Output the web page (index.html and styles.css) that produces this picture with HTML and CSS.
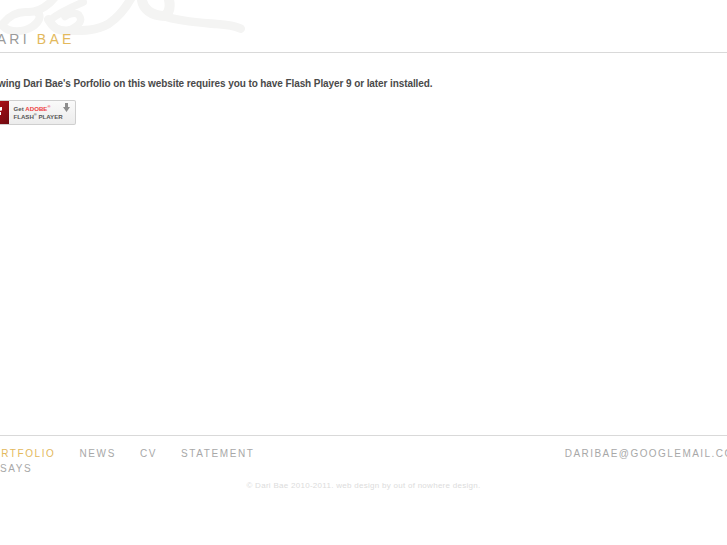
FILE: index.html
```html
<!DOCTYPE html>
<html lang="en">
<head>
<meta charset="utf-8">
<title>Dari Bae</title>
<link rel="stylesheet" href="styles.css">
</head>
<body>
<div class="page">
  <header class="header">
    <svg class="brush" width="270" height="40" viewBox="0 0 810 120" aria-hidden="true">
      <g fill="none" stroke="#f4f4f3" stroke-linecap="round" stroke-linejoin="round">
        <path stroke-width="24" d="M8 72C25 50 50 35 80 36C105 38 125 30 150 8L165 -8"/>
        <path stroke-width="24" d="M8 78C30 100 70 98 100 78C118 64 125 48 112 36"/>
        <path stroke-width="26" d="M145 58C160 82 170 94 205 92C250 92 290 92 325 72C355 52 375 28 395 -8"/>
        <path stroke-width="22" d="M150 60C175 40 205 25 250 6M205 92C240 75 250 62 236 44C225 36 205 42 195 50"/>
        <path stroke-width="30" d="M425 -5C428 28 455 48 495 48C510 35 512 15 505 -8"/>
        <path stroke-width="26" d="M490 48C540 65 600 68 650 72C680 74 705 78 722 86"/>
      </g>
    </svg>
    <h1 class="logo">DARI <span class="accent">BAE</span></h1>
  </header>
  <main class="main">
    <p class="message">Viewing Dari Bae's Porfolio on this website requires you to have Flash Player 9 or later installed.</p>
    <a class="flash" href="#">
      <span class="flash-mark"><svg width="14" height="16" viewBox="0 0 14 16" aria-hidden="true"><path d="M13 2C8 2 7 6 6 9C5.500 11 4 12 2 12V15C7 15 8.500 12 9 10H12V7H10C10.500 6 11.500 5.500 13 5.500Z" fill="#fff"/></svg></span>
      <span class="flash-text"><span>Get <b class="adobe">ADOBE<sup>®</sup></b></span><span>FLASH<sup>®</sup> PLAYER</span></span>
      <svg class="flash-arrow" width="7" height="10" viewBox="0 0 7 10" aria-hidden="true"><path d="M2 0H5V4H7L3.500 9L0 4H2Z" fill="#8d8d8d"/></svg>
    </a>
  </main>
  <footer class="footer">
    <div class="footer-row">
      <nav class="nav">
        <a class="nav-link accent" href="#">PORTFOLIO</a>
        <a class="nav-link" href="#">NEWS</a>
        <a class="nav-link" href="#">CV</a>
        <a class="nav-link" href="#">STATEMENT</a>
        <a class="nav-link" href="#">ESSAYS</a>
      </nav>
      <a class="email" href="#">DARIBAE@GOOGLEMAIL.COM</a>
    </div>
    <p class="copyright">© Dari Bae 2010-2011. web design by out of nowhere design.</p>
  </footer>
</div>
</body>
</html>
```
FILE: styles.css
```css
html, body {
  margin: 0;
  padding: 0;
  background: #fff;
  overflow: hidden;
  height: 100%;
}
.page {
  width: 760px;
  margin-left: calc(50% - 380px);
  font-family: "Liberation Sans", Arial, sans-serif;
  color: #a3a3a3;
}
.header {
  position: relative;
  height: 52px;
  border-bottom: 1px solid #d9d9d9;
}
.brush {
  position: absolute;
  left: 16.500px;
  top: 0;
  filter: blur(.6px);
}
.logo {
  position: absolute;
  left: 0;
  top: 31px;
  margin: 0;
  font-size: 14px;
  line-height: 16px;
  font-weight: normal;
  letter-spacing: 3.200px;
  color: #9a9a9a;
}
.accent {
  color: #e3b95c;
}
.main {
  height: 382px;
}
.message {
  margin: 0;
  padding-top: 24px;
  font-size: 10px;
  line-height: 13px;
  font-weight: bold;
  letter-spacing: -.09px;
  color: #4a4a4a;
}
.flash {
  display: flex;
  width: 92px;
  height: 25px;
  margin-top: 10px;
  box-sizing: border-box;
  border: 1px solid #cfcfcf;
  border-left: 0;
  border-radius: 2px;
  background: linear-gradient(#fafafa, #ececec);
  text-decoration: none;
  position: relative;
}
.flash-mark {
  display: flex;
  align-items: center;
  justify-content: center;
  width: 25px;
  height: 23px;
  background: linear-gradient(135deg, #c8101a, #6e0a10);
}
.flash-text {
  display: flex;
  flex-direction: column;
  justify-content: center;
  margin-left: 5px;
  font-size: 6.100px;
  line-height: 8px;
  font-weight: bold;
  color: #555;
  white-space: nowrap;
}
.flash-text sup {
  font-size: 4px;
  line-height: 0;
}
.adobe {
  color: #ee3a40;
}
.flash-arrow {
  position: absolute;
  right: 5px;
  top: 2px;
}
.footer {
  border-top: 1px solid #d9d9d9;
}
.footer-row {
  display: flex;
  justify-content: space-between;
  padding-top: 10px;
}
.nav {
  width: 280px;
  display: flex;
  flex-wrap: wrap;
  column-gap: 24px;
}
.nav-link, .email {
  font-size: 10px;
  line-height: 15px;
  letter-spacing: 1.600px;
  color: #a8a8a8;
  text-decoration: none;
}
.email {
  letter-spacing: 1.450px;
}
.nav-link.accent {
  color: #e3b95c;
}
.copyright {
  margin: 4px 0 0;
  text-align: center;
  font-size: 8px;
  line-height: 12px;
  letter-spacing: .28px;
  color: #dcdcdc;
}
```
